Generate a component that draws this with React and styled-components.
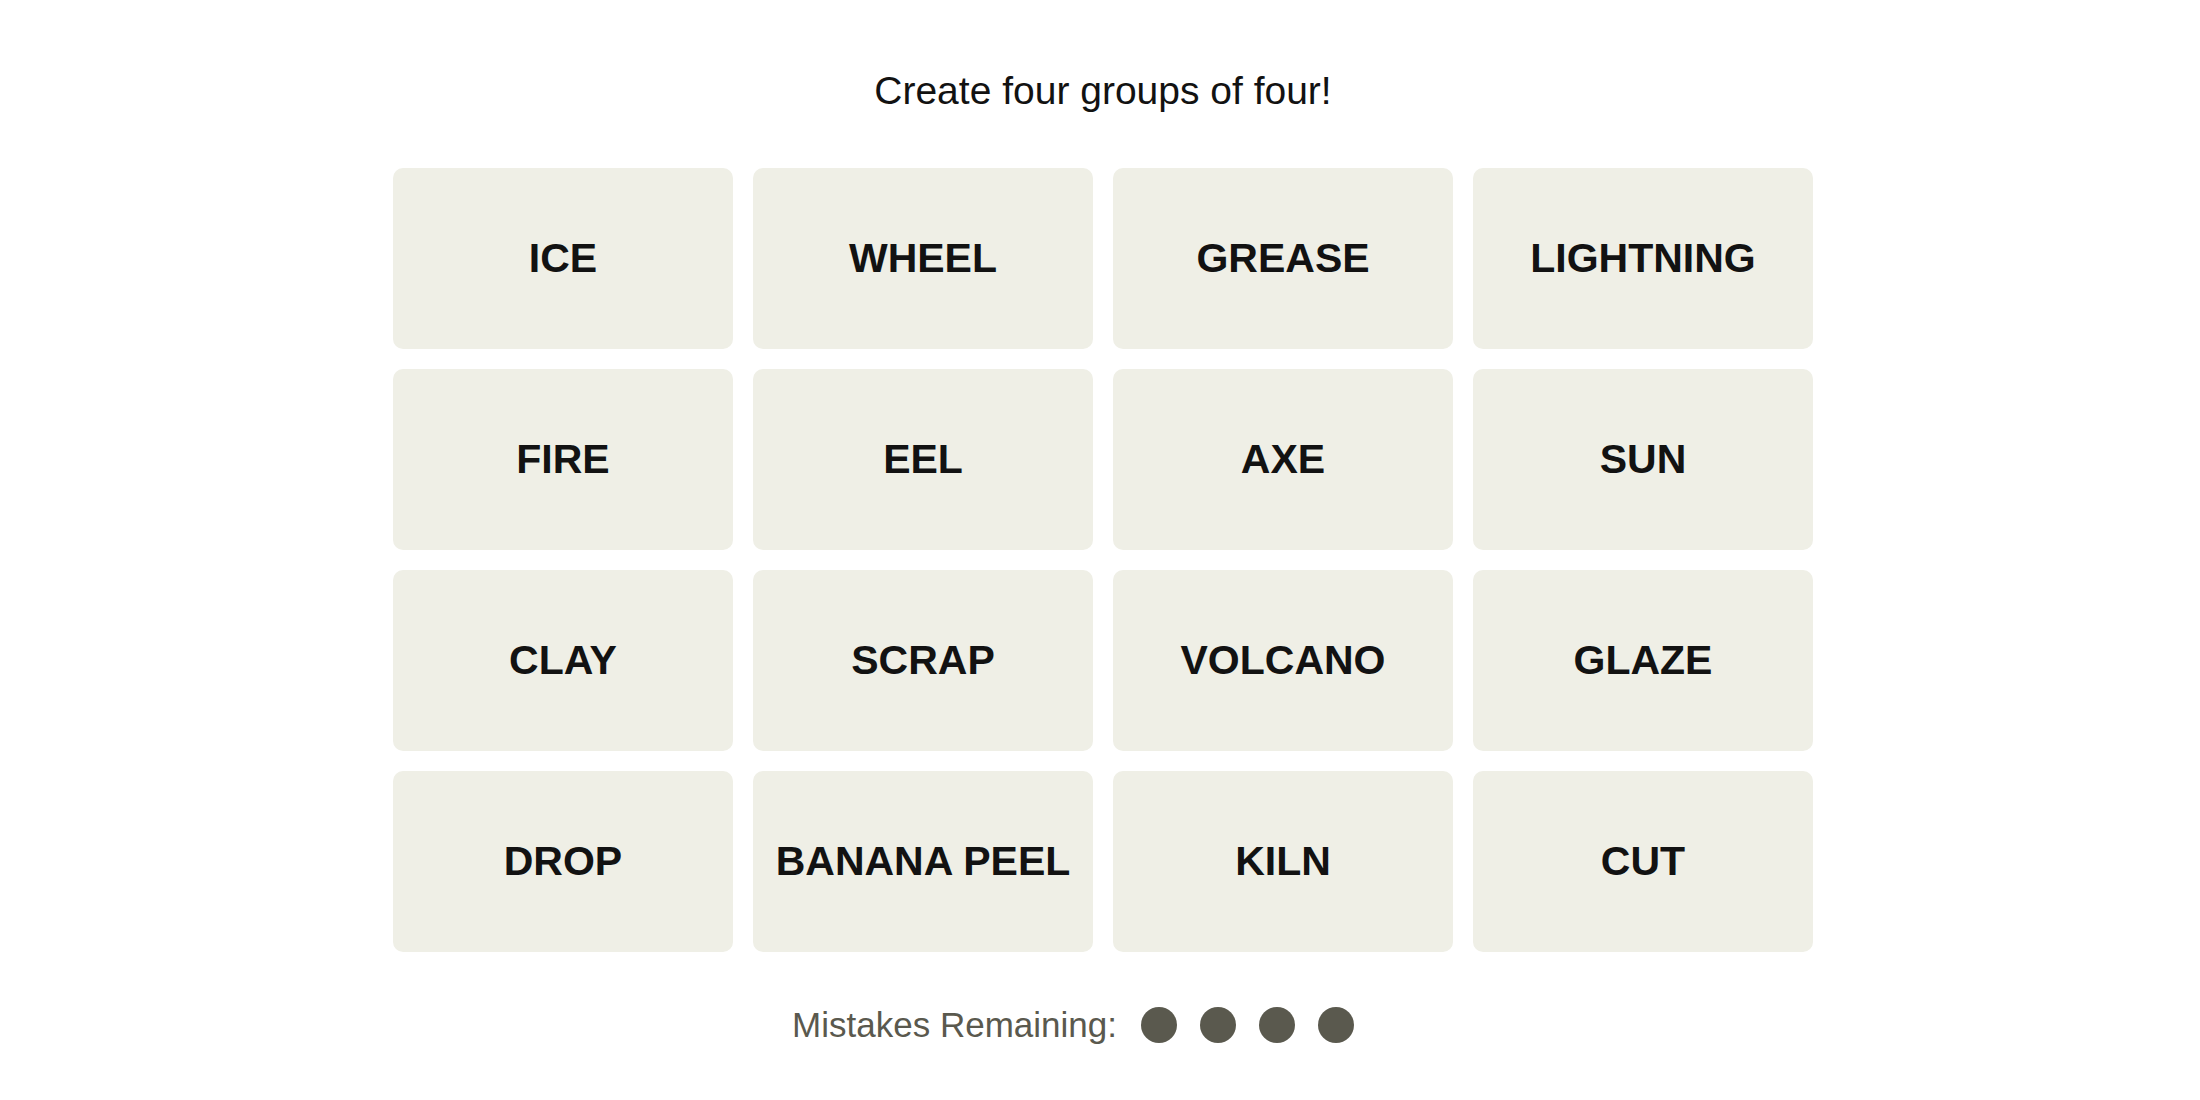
import React from 'react'
import styled, { createGlobalStyle } from 'styled-components'

const words = [
  'ICE', 'WHEEL', 'GREASE', 'LIGHTNING',
  'FIRE', 'EEL', 'AXE', 'SUN',
  'CLAY', 'SCRAP', 'VOLCANO', 'GLAZE',
  'DROP', 'BANANA PEEL', 'KILN', 'CUT',
]

function App() {
  return (
    <>
      <GlobalStyle />
      <Page>
        <Title>Create four groups of four!</Title>
        <Board>
          {words.map((w) => (
            <Tile key={w}>{w}</Tile>
          ))}
        </Board>
        <Mistakes>
          <span>Mistakes Remaining:</span>
          <Dots>
            {[0, 1, 2, 3].map((i) => (
              <Dot key={i} />
            ))}
          </Dots>
        </Mistakes>
      </Page>
    </>
  )
}

const GlobalStyle = createGlobalStyle`
  body {
    margin: 0;
    background: #ffffff;
    font-family: "Liberation Sans", Arial, sans-serif;
  }
`;

const Page = styled.div`
  display: flex;
  flex-direction: column;
  align-items: center;
  padding-top: 67px;
  padding-left: 6px;
`;

const Title = styled.h1`
  margin: 0;
  font-size: 39px;
  font-weight: 400;
  line-height: 47px;
  color: #121212;
`;

const Board = styled.div`
  display: grid;
  grid-template-columns: repeat(4, 340px);
  grid-auto-rows: 181px;
  gap: 20px;
  margin-top: 54px;
`;

const Tile = styled.div`
  display: flex;
  align-items: center;
  justify-content: center;
  background: #efefe6;
  border-radius: 10px;
  font-size: 41px;
  font-weight: 700;
  color: #121212;
`;

const Mistakes = styled.div`
  display: flex;
  align-items: center;
  gap: 24px;
  margin-top: 53px;
  margin-right: 60px;
  font-size: 35px;
  color: #5a594e;
`;

const Dots = styled.div`
  display: flex;
  gap: 23px;
`;

const Dot = styled.div`
  width: 36px;
  height: 36px;
  border-radius: 50%;
  background: #5a594e;
`;

export default App
